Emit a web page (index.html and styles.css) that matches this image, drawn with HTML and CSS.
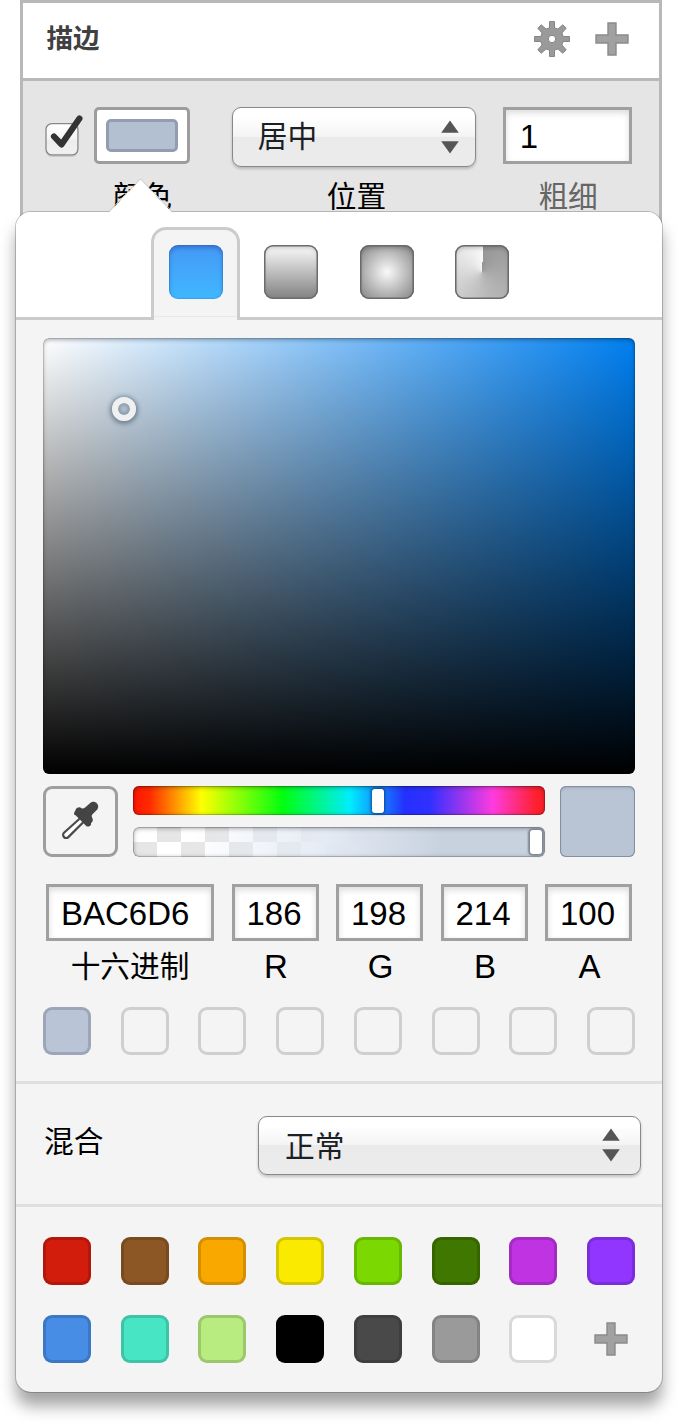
FILE: index.html
```html
<!DOCTYPE html>
<html lang="zh-CN">
<head>
<meta charset="utf-8">
<title>描边</title>
<link rel="stylesheet" href="styles.css">
</head>
<body>
<svg class="defs" width="0" height="0">
  <defs>
    <symbol id="plus" viewBox="0 0 34 34"><path d="M13 1h8v12h12v8H21v12h-8V21H1v-8h12z" fill="#a1a1a1" stroke="#8a8a8a" stroke-width="1.4"/></symbol>
    <symbol id="updown" viewBox="0 0 18 34"><path d="M9 .5 17.8 12.7H.2z" fill="#555"/><path d="M9 33.5.2 21.3h17.6z" fill="#555"/></symbol>
    <linearGradient id="boxfill" x1="0" y1="0" x2="0" y2="1"><stop offset="0" stop-color="#fff"/><stop offset=".5" stop-color="#f5f5f5"/><stop offset=".52" stop-color="#ececec"/><stop offset="1" stop-color="#f1f1f1"/></linearGradient>
  </defs>
</svg>

<section class="panel">
  <header class="panel-head">
    <h1 class="panel-title">描边</h1>
    <svg class="gear" viewBox="-19 -19 38 38">
      <g fill="#9a9a9a" stroke="#858585" stroke-width="1">
        <path d="M-2.5-17.5H2.5V-11.2L5.9-9.9 10.8-14.2 14.2-10.8 9.9-5.9 11.2-2.5H17.5V2.5H11.2L9.9 5.9 14.2 10.8 10.8 14.2 5.9 9.9 2.5 11.2V17.5H-2.5V11.2L-5.9 9.9-10.8 14.2-14.2 10.8-9.9 5.9-11.2 2.5H-17.5V-2.5H-11.2L-9.9-5.9-14.2-10.8-10.8-14.2-5.9-9.9-2.5-11.2z"/>
        <circle r="3.7" fill="#fff"/>
      </g>
    </svg>
    <svg class="plus"><use href="#plus"/></svg>
  </header>
  <div class="stroke-row">
    <svg class="check" viewBox="0 0 40 48">
      <rect x="1" y="11" width="32" height="32" rx="6" fill="#999" opacity=".35"/>
      <rect x="1" y="9.5" width="32" height="31.500" rx="6" fill="url(#boxfill)" stroke="#888" stroke-width="1.3"/>
      <path d="M9 22.500 16.500 30.500 34.500 4.500" fill="none" stroke="#333" stroke-width="6.200" stroke-linecap="round" stroke-linejoin="round"/>
    </svg>
    <div class="field color-field">
      <div class="control"><div class="well"><div class="well-fill"></div></div></div>
      <div class="label">颜色</div>
    </div>
    <div class="field position-field">
      <div class="control"><div class="select"><span>居中</span><svg class="updown"><use href="#updown"/></svg></div></div>
      <div class="label">位置</div>
    </div>
    <div class="field width-field">
      <div class="control"><div class="input">1</div></div>
      <div class="label muted">粗细</div>
    </div>
  </div>
</section>

<section class="popover">
  <svg class="arrow" viewBox="0 0 66 36"><path d="M0 35.5 30 4Q32.5-.5 35 4L65 35.5z" fill="#fff"/><path d="M0 34.5 30 3.5Q32.5-.8 35 3.5L65 34.5" fill="none" stroke="#ccc"/></svg>
  <nav class="tabs">
    <div class="tab active"><div class="tab-icon solid"></div></div>
    <div class="tab"><div class="tab-icon linear"></div></div>
    <div class="tab"><div class="tab-icon radial"></div></div>
    <div class="tab"><div class="tab-icon angular"></div></div>
  </nav>
  <div class="picker">
    <div class="spectrum"><div class="cursor"></div></div>
    <div class="mixer">
      <div class="dropper">
        <svg viewBox="0 0 40 40">
          <path d="M21.5 16 4 31.800a3 3 0 0 0 4.300 4.300L25 19.500" fill="#fff" stroke="#4a4a4a" stroke-width="2.2"/>
          <path d="M15.200 9.700c1.300-3.300 3.800-4 6.100-2.800 1.600.9 2.900.6 4.100-.6l4.800-4.400c4.500-3.600 10.300 1.800 7.100 6.500l-4.800 4.900c-1 1.100-1.100 2-.4 3.200 1.400 2.500.5 4.500-1.100 5.600l.1 1.500c-1.500 2.600-3.900 2.500-5.400.8L15.600 14.200c-1.800.2-2.200-2.500-.4-4.500z" fill="#444"/>
        </svg>
      </div>
      <div class="sliders">
        <div class="slider hue"><div class="knob hue-knob"></div></div>
        <div class="slider alpha"><div class="knob alpha-knob"></div></div>
      </div>
      <div class="preview"></div>
    </div>
    <div class="values">
      <div class="value hex"><div class="input">BAC6D6</div><div class="label">十六进制</div></div>
      <div class="value"><div class="input">186</div><div class="label latin">R</div></div>
      <div class="value"><div class="input">198</div><div class="label latin">G</div></div>
      <div class="value"><div class="input">214</div><div class="label latin">B</div></div>
      <div class="value"><div class="input">100</div><div class="label latin">A</div></div>
    </div>
    <div class="swatches recent">
      <i class="swatch current"></i><i class="swatch"></i><i class="swatch"></i><i class="swatch"></i><i class="swatch"></i><i class="swatch"></i><i class="swatch"></i><i class="swatch"></i>
    </div>
  </div>
  <div class="blend">
    <span class="blend-label">混合</span>
    <div class="select"><span>正常</span><svg class="updown"><use href="#updown"/></svg></div>
  </div>
  <div class="swatches palette">
    <i class="swatch red"></i><i class="swatch brown"></i><i class="swatch orange"></i><i class="swatch yellow"></i><i class="swatch lime"></i><i class="swatch green"></i><i class="swatch magenta"></i><i class="swatch purple"></i>
    <i class="swatch blue"></i><i class="swatch teal"></i><i class="swatch mint"></i><i class="swatch black"></i><i class="swatch charcoal"></i><i class="swatch gray"></i><i class="swatch white"></i><svg class="plus add"><use href="#plus"/></svg>
  </div>
</section>
</body>
</html>
```
FILE: styles.css
```css
* { box-sizing: border-box; }
body {
  margin: 0;
  position: relative;
  height: 1422px;
  overflow: hidden;
  background: #fff;
  color: #000;
  font-family: "Liberation Sans", "Noto Sans CJK SC", sans-serif;
  font-size: 29.7px;
}
.defs { display: block; }

/* Inspector panel */
.panel {
  width: 642px;
  height: 300px;
  margin-left: 19.5px;
  border: 3px solid #b8b8b8;
  border-bottom: 0;
  background: #e5e5e5;
}
.panel-head {
  display: flex;
  align-items: center;
  height: 78px;
  padding: 0 30px 3px 24px;
  border-bottom: 3px solid #b8b8b8;
  background: #fff;
}
.panel-title {
  flex: 1;
  margin: 0;
  color: #404040;
  font-size: 26.5px;
  font-weight: 700;
  line-height: 40px;
}
.gear { width: 38px; height: 38px; margin-right: 24px; }
.plus { width: 34px; height: 34px; }

.stroke-row {
  display: flex;
  align-items: flex-start;
  padding: 26px 27px 0 22px;
}
.check { width: 40px; height: 48px; margin-top: 7px; }
.color-field { width: 96px; margin-left: 10px; }
.position-field { width: 245px; margin-left: 41.5px; }
.width-field { width: 129px; margin-left: 26.5px; }
.control { height: 60px; }
.label {
  height: 40px;
  line-height: 40px;
  text-align: center;
  white-space: nowrap;
}
.field .label { margin-top: 10px; }
.position-field .label { padding-left: 5px; }
.width-field .label { padding-left: 2px; }
.muted { color: #666; }
.well {
  height: 57px;
  padding: 9px;
  border: 3px solid #9d9d9d;
  border-radius: 5px;
  background: #fff;
}
.well-fill {
  height: 33px;
  border: 3px solid #929eb0;
  border-radius: 5px;
  background: #b3c0d1;
}
.select {
  display: flex;
  align-items: center;
  justify-content: space-between;
  height: 60px;
  padding: 0 16px 0 25px;
  border: 1.5px solid #888;
  border-radius: 9px;
  background: linear-gradient(#fff 15%, #f4f4f4 49%, #eaeaea 50%, #ececec);
  box-shadow: 0 2px 3px rgba(0, 0, 0, .2);
  color: #1b2025;
}
.select span { line-height: 52px; padding-bottom: 1px; }
.updown { width: 18px; height: 34px; }
.input {
  height: 57px;
  padding: 0 14px;
  border: 3px solid #a0a0a0;
  background: #fff;
  box-shadow: inset 0 3px 6px rgba(0, 0, 0, .14);
  font-size: 33px;
  line-height: 53px;
}

/* Color popover */
.popover {
  position: absolute;
  left: 16px;
  top: 212px;
  width: 646px;
  height: 1180px;
  border-radius: 15px;
  background: #f4f4f4;
  box-shadow: 0 0 0 1px rgba(0, 0, 0, .2), 0 14px 16px rgba(0, 0, 0, .36);
}
.arrow { position: absolute; left: 92px; top: -34px; width: 66px; height: 36px; }
.tabs {
  display: flex;
  align-items: flex-start;
  height: 108px;
  padding: 15px 0 0 135px;
  border-bottom: 3px solid #cbcbcb;
  border-radius: 15px 15px 0 0;
  background: #fff;
}
.tab {
  width: 89px;
  height: 93px;
  margin-right: 6.6px;
  padding: 15px 14.5px;
  border: 3px solid transparent;
  border-bottom: 0;
}
.active {
  border-color: #cbcbcb;
  border-radius: 15px 15px 0 0;
  background: linear-gradient(#e8e8e8, #e8e8e8) 0 89px / 100% 1px no-repeat, #f4f4f4;
  background-origin: border-box;
}
.tab-icon { width: 54px; height: 54px; border-radius: 9px; }
.solid {
  background: linear-gradient(#4598f5, #40b8ff);
  box-shadow: inset 0 3px 4px rgba(20, 50, 140, .35), inset 0 0 1px 1px rgba(20, 70, 160, .18);
}
.linear {
  background: linear-gradient(#f0f0f0 10%, #808080);
  box-shadow: inset 0 0 0 1.5px #6c6c6c, inset 0 3px 4px rgba(0, 0, 0, .15);
}
.radial {
  background: radial-gradient(circle, #fafafa, #8e8e8e 34px);
  box-shadow: inset 0 0 0 1.5px #6a6a6a, inset 0 3px 4px rgba(0, 0, 0, .22);
}
.angular {
  background: conic-gradient(from 3deg, #969696, #b8b8b8 45%, #f8f8f8);
  box-shadow: inset 0 0 0 1.5px #6a6a6a, inset 0 3px 4px rgba(0, 0, 0, .22);
}

.picker { height: 764px; padding: 17.5px 27px 0; border-bottom: 3px solid #dfdfdf; }
.spectrum {
  position: relative;
  height: 436px;
  border-radius: 6px;
  background: linear-gradient(transparent, #000), linear-gradient(to right, #fff, #007ff0);
  box-shadow: inset 0 2px 4px rgba(0, 0, 0, .3), inset 0 0 1px 1px rgba(0, 0, 0, .15);
}
.cursor {
  position: absolute;
  left: 69px;
  top: 59px;
  width: 24px;
  height: 24px;
  border: 6px solid #f0f0f0;
  border-radius: 50%;
  box-shadow: 0 1px 4px 2px rgba(50, 70, 90, .5), inset 0 0 4px 2px rgba(50, 70, 90, .4);
}
.mixer {
  display: flex;
  gap: 15px;
  height: 71.5px;
  margin-top: 12px;
}
.dropper {
  display: flex;
  align-items: center;
  justify-content: center;
  width: 75px;
  padding-right: 1px;
  border: 3px solid #9e9e9e;
  border-radius: 9px;
}
.dropper svg { width: 40px; height: 40px; }
.sliders { display: flex; flex: 1; flex-direction: column; gap: 12px; }
.slider {
  position: relative;
  height: 29.75px;
  border-radius: 6px;
  box-shadow: inset 0 1px 5px rgba(0, 0, 0, .4), inset 0 0 0 1px rgba(0, 0, 0, .18);
}
.hue {
  background: linear-gradient(to right, #ff1500, #ff2a00 4%, #ffff00 16.6%, #00ff10 36.5%, #00ecff 52.8%, #2430ff 66%, #3030ff 72%, #ff3bdf 87.4%, #ff202c 98%);
}
.alpha {
  background:
    linear-gradient(to right, rgba(238, 243, 255, 0) 14%, rgba(228, 234, 244, .95) 46%, #c8d2df 75%, #c8d2df),
    conic-gradient(#e6e6e6 25%, #fff 0 50%, #e6e6e6 0 75%, #fff 0) 0 0 / 48px 30px;
}
.knob {
  position: absolute;
  top: 3px;
  width: 12px;
  height: 24px;
  border-radius: 3px;
  background: #fff;
}
.hue-knob { left: 239px; box-shadow: 0 0 3px 1px rgba(10, 50, 100, .75); }
.alpha-knob { left: 397px; box-shadow: 0 0 2px 2px #7c8592; }
.preview {
  width: 75px;
  border-radius: 6px;
  background: #b9c4d5;
  box-shadow: inset 0 0 0 1px #8290a0, inset 0 2px 3px rgba(0, 0, 0, .15);
}
.values { display: flex; gap: 17.5px; padding: 0 3px; margin-top: 27px; }
.value { width: 87px; }
.hex { width: 168px; }
.values .input { padding: 0 12px; }
.values .label { height: 39px; margin-top: 6px; }
.values .latin { padding-left: 2px; font-size: 33px; }
.swatches { display: flex; flex-wrap: wrap; justify-content: space-between; gap: 30px 29.7px; }
.recent { margin-top: 21px; }
.swatch {
  width: 48px;
  height: 48px;
  border: 3px solid rgba(0, 0, 0, .15);
  border-radius: 9px;
}
.current { background: #b9c4d7; }

.blend {
  display: flex;
  align-items: flex-start;
  justify-content: space-between;
  height: 123px;
  padding: 31.5px 21px 0 28px;
  border-bottom: 3px solid #dfdfdf;
}
.blend-label { line-height: 51px; }
.blend .select { width: 383px; height: 59.5px; padding-left: 26px; padding-right: 20px; }
.blend .select span { padding: 3px 0 0; }

.palette { padding: 29.5px 27px 0; }
.add { margin: 7px; }
.red { background: #d21d0c; }
.brown { background: #8d5725; }
.orange { background: #f9a800; }
.yellow { background: #f9ea00; }
.lime { background: #7bd800; }
.green { background: #407700; }
.magenta { background: #c033e3; }
.purple { background: #9136ff; }
.blue { background: #478ce5; }
.teal { background: #48e5c5; }
.mint { background: #b8ec81; }
.black { background: #000; }
.charcoal { background: #494949; }
.gray { background: #9a9a9a; }
.white { background: #fff; }
```
